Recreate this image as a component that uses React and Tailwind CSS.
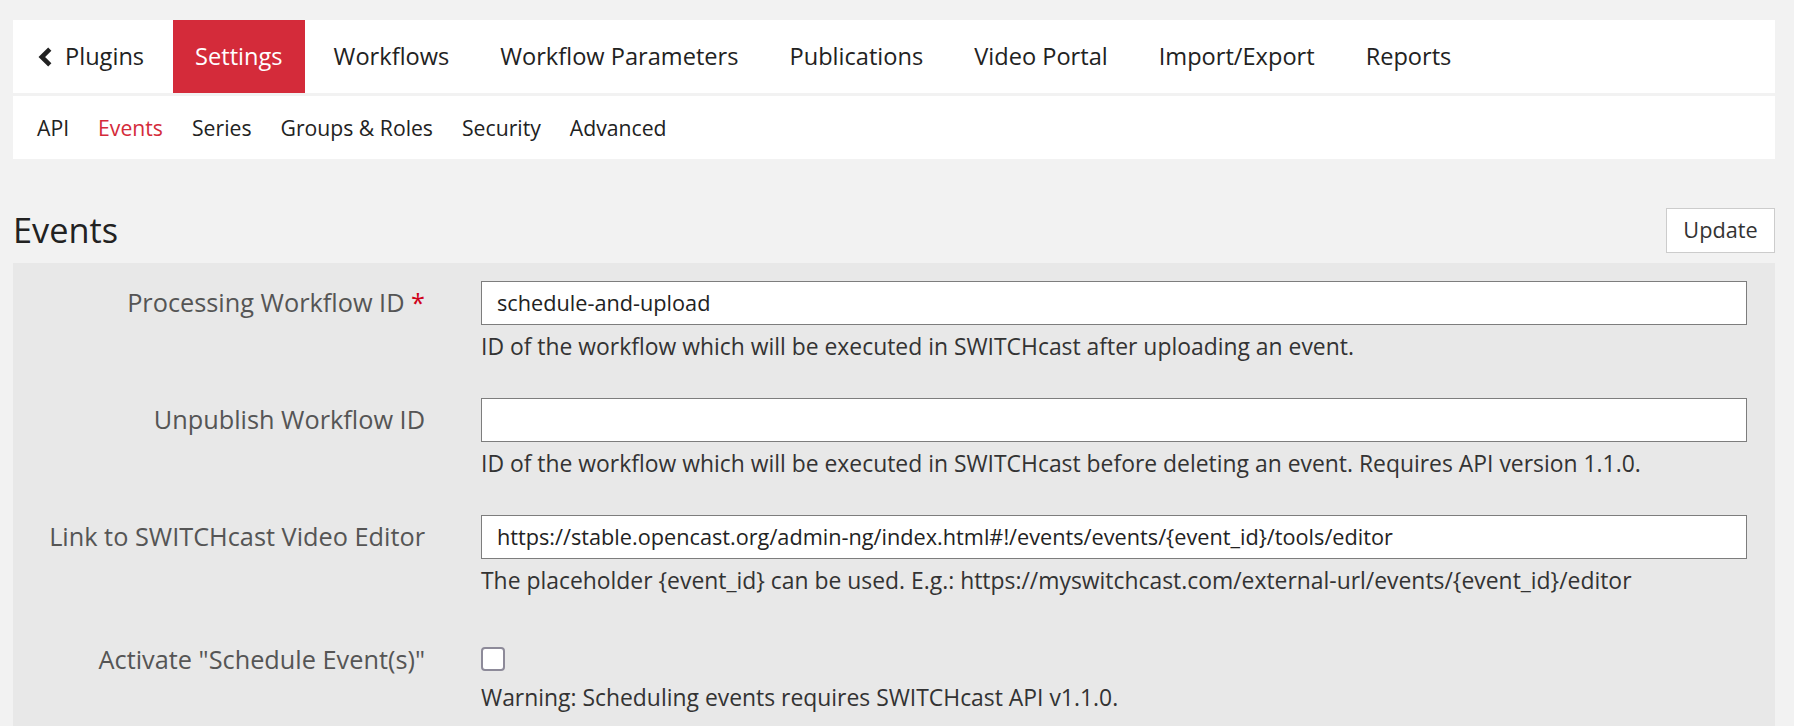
import React from "react";

const navItems = ["Settings", "Workflows", "Workflow Parameters", "Publications", "Video Portal", "Import/Export", "Reports"];
const subItems = ["API", "Events", "Series", "Groups & Roles", "Security", "Advanced"];

function Row({ label, required, children, last }) {
  return (
    <div className={`grid grid-cols-[412px_1fr] gap-x-[56px] ${last ? "" : "mb-[36px]"}`}>
      <div className="flex h-[44px] items-center justify-end text-[25.3px] text-[#555555]">
        <span>
          {label}
          {required && <span className="text-[#d0021b]"> *</span>}
        </span>
      </div>
      <div>{children}</div>
    </div>
  );
}

function Field({ value, help }) {
  return (
    <>
      <div className="flex h-[44px] items-center border border-[#7d7d7d] bg-white px-[15px] text-[21.7px] text-[#222222]">
        {value}
      </div>
      <div className="mt-[7px] text-[22.9px] leading-[30px] text-[#333333]">{help}</div>
    </>
  );
}

export default function App() {
  return (
    <div
      className="min-h-screen bg-[#f2f2f2] pt-[20px] pl-[13px] pr-[19px]"
      style={{ fontFamily: '"Open Sans", "Noto Sans", sans-serif' }}
    >
      <nav className="flex h-[73px] items-stretch gap-[7px] bg-white pl-[3px] text-[23.6px] text-[#222222]">
        <a className="flex items-center gap-[13px] px-[22px]">
          <svg width="14" height="20" viewBox="0 0 14 20" aria-hidden="true">
            <polyline points="11.8,2.2 3.8,10 11.8,17.8" fill="none" stroke="#222" strokeWidth="4.6" strokeLinejoin="miter" />
          </svg>
          <span>Plugins</span>
        </a>
        {navItems.map((n) => (
          <a
            key={n}
            className={`flex items-center px-[22px] ${n === "Settings" ? "bg-[#d42b3a] text-white" : ""}`}
          >
            {n}
          </a>
        ))}
      </nav>

      <div className="mt-[3px] flex h-[63px] items-center gap-[29px] bg-white pl-[24px] text-[21.2px] text-[#222222]">
        {subItems.map((s) => (
          <a key={s} className={s === "Events" ? "text-[#d42b3a]" : ""}>
            {s}
          </a>
        ))}
      </div>

      <div className="mt-[49px] flex items-center justify-between">
        <h1 className="text-[34.3px] leading-none text-[#222222]">Events</h1>
        <button className="h-[45px] w-[109px] border border-[#cccccc] bg-white text-[21.7px] text-[#333333]">
          Update
        </button>
      </div>

      <div className="mt-[10px] bg-[#e8e8e8] pt-[18px] pr-[28px] pb-[40px]">
        <Row label="Processing Workflow ID" required>
          <Field
            value="schedule-and-upload"
            help="ID of the workflow which will be executed in SWITCHcast after uploading an event."
          />
        </Row>
        <Row label="Unpublish Workflow ID">
          <Field
            value=""
            help="ID of the workflow which will be executed in SWITCHcast before deleting an event. Requires API version 1.1.0."
          />
        </Row>
        <Row label="Link to SWITCHcast Video Editor">
          <Field
            value="https://stable.opencast.org/admin-ng/index.html#!/events/events/{event_id}/tools/editor"
            help="The placeholder {event_id} can be used. E.g.: https://myswitchcast.com/external-url/events/{event_id}/editor"
          />
        </Row>
        <div className="grid grid-cols-[412px_1fr] gap-x-[56px]">
          <div className="flex h-[56px] items-center justify-end text-[25.3px] text-[#555555]">
            Activate "Schedule Event(s)"
          </div>
          <div>
            <div className="mt-[15px] h-[24px] w-[24px] rounded-[4px] border-2 border-[#8d8a99] bg-white" />
            <div className="mt-[12px] text-[22.9px] leading-[30px] text-[#333333]">
              Warning: Scheduling events requires SWITCHcast API v1.1.0.
            </div>
          </div>
        </div>
      </div>
    </div>
  );
}
